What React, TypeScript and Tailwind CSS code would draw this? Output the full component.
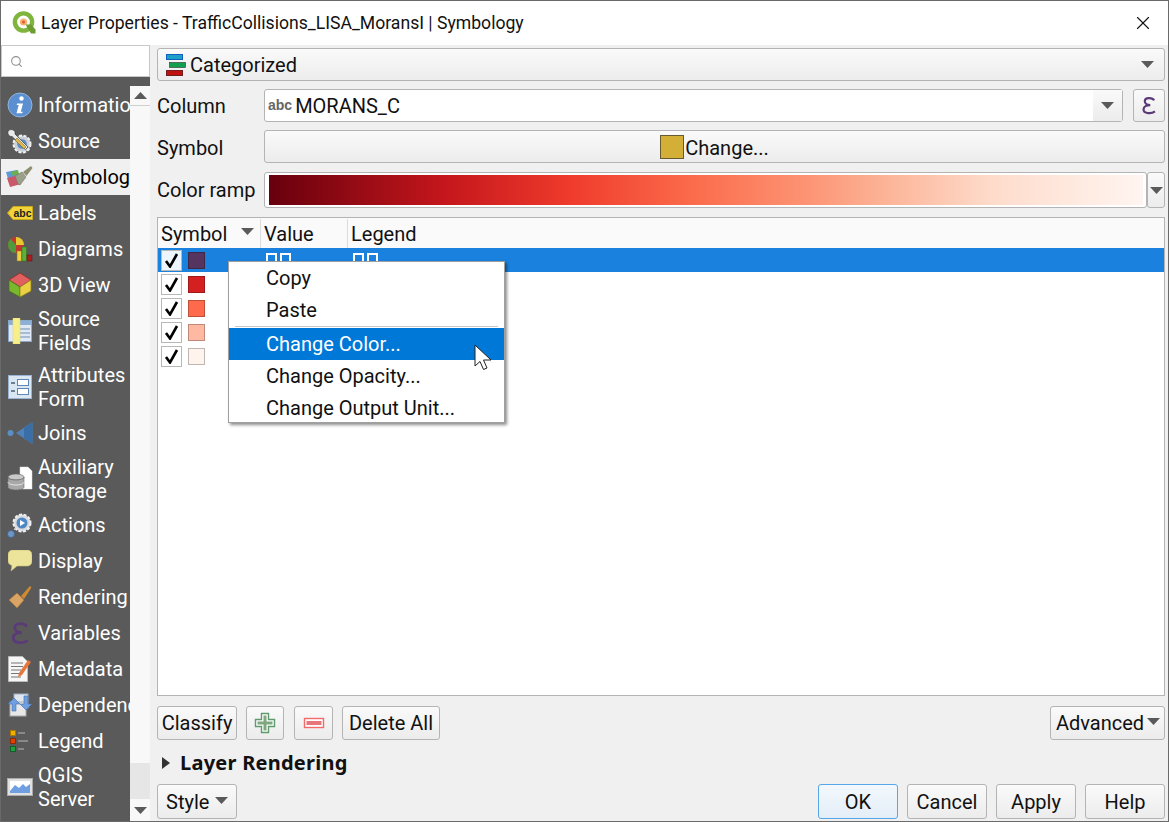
import { ReactNode } from "react";
import { Search, X } from "lucide-react";

function Arrow({ className = "" }: { className?: string }) {
  return (
    <svg width="13" height="7" viewBox="0 0 13 7" className={className}>
      <path d="M0 0h13L6.5 7z" fill="#5a5a5a" />
    </svg>
  );
}

function Btn({ children, className = "" }: { children: ReactNode; className?: string }) {
  return (
    <div
      className={`flex items-center border border-[#b4b4b4] rounded-[3px] bg-gradient-to-b from-[#fafafa] to-[#ececec] ${className}`}
    >
      {children}
    </div>
  );
}

function Epsilon({ size = 22 }: { size?: number }) {
  return (
    <svg width={size * 0.8} height={size} viewBox="0 0 18 22">
      <path
        d="M15.500 5C14 1.500 4.500 1 4.500 6c0 2.800 2.800 4.600 6.500 4.600-4.200 0-8 1.600-8 5.200 0 5 9.500 5.400 13.500 2.200"
        fill="none"
        stroke="#5b3a78"
        strokeWidth="2.600"
      />
    </svg>
  );
}

function QgisLogo() {
  return (
    <svg width="24" height="24" viewBox="0 0 24 24">
      <circle cx="11.500" cy="11" r="8.600" fill="#fff" stroke="#7fb53c" strokeWidth="4.400" />
      <circle cx="11.500" cy="11" r="3.600" fill="#f5b26b" />
      <circle cx="11.500" cy="11" r="1.500" fill="#e8533a" />
      <path d="M13.500 13.500h5.500l4.500 5v4h-4.500z" fill="#6d9c33" />
    </svg>
  );
}

const Icons: Record<string, ReactNode> = {
  info: (
    <svg width="26" height="26" viewBox="0 0 26 26">
      <circle cx="13" cy="13" r="12" fill="#5b8fd0" stroke="#8fb5e0" />
      <circle cx="14.500" cy="6.500" r="2.200" fill="#fff" />
      <path d="M10 11.500h6l-2.200 8.200h2l-.6 1.600H9.500l2.200-8.200H9.700z" fill="#fff" />
    </svg>
  ),
  source: (
    <svg width="26" height="26" viewBox="0 0 26 26">
      <circle cx="15" cy="16" r="8.500" fill="#c9ced4" stroke="#eef0f2" strokeWidth="2" strokeDasharray="3 1.600" />
      <circle cx="15" cy="16" r="4.800" fill="#5c8fc4" />
      <path d="M1 3c3-3 8-1 7 3l13 13-2.600 2.600L5 8.500C3 9 0 6.500 1 3z" fill="#e9e9e9" stroke="#333" strokeWidth=".7" />
      <path d="M10 10l9 9-2 2-9-9z" fill="#e2b84a" stroke="#6a5a20" strokeWidth=".5" />
    </svg>
  ),
  symbology: (
    <svg width="27" height="22" viewBox="0 0 27 22">
      <path d="M0 6l11-2 1 5L2 13z" fill="#5d9ad8" />
      <path d="M5 6l7-2 1 4-6 2z" fill="#6ab04c" />
      <path d="M1 12l11-3 3 9-11 3z" fill="#c9586a" />
      <path d="M9 10l7-4 4 5-6 8-2-1z" fill="#9aa08a" stroke="#6f7565" strokeWidth=".6" />
      <path d="M17 6l8-6 1.500 2-6 8z" fill="#8d8f70" />
    </svg>
  ),
  labels: (
    <svg width="26" height="14" viewBox="0 0 26 14">
      <path d="M6 .5h19.500v13H6L.5 7z" fill="#f3d33a" stroke="#c9a81a" />
      <text x="15.500" y="10.500" textAnchor="middle" fontSize="10.500" fontWeight="700" fill="#222" fontFamily="Liberation Sans">abc</text>
    </svg>
  ),
  diagrams: (
    <svg width="26" height="26" viewBox="0 0 26 26">
      <circle cx="9" cy="9" r="8" fill="#c2372e" />
      <path d="M9 9V1a8 8 0 0 1 8 8z" fill="#e6c832" />
      <path d="M9 9v8a8 8 0 0 1-8-8 8 8 0 0 1 2.500-6z" fill="#4f9a3a" />
      <rect x="10" y="15" width="4.500" height="10" fill="#f0d040" stroke="#8a7a10" strokeWidth=".5" />
      <rect x="15" y="11" width="4.500" height="14" fill="#5fb03a" stroke="#356d1f" strokeWidth=".5" />
      <rect x="20" y="19" width="5" height="6" fill="#a8201c" stroke="#5f100e" strokeWidth=".5" />
    </svg>
  ),
  view3d: (
    <svg width="26" height="26" viewBox="0 0 26 26">
      <path d="M13 1l11 7-11 7L2 8z" fill="#e06060" stroke="#922" strokeWidth=".7" />
      <path d="M2 8l11 7v10L2 19z" fill="#79b82c" stroke="#456f14" strokeWidth=".7" />
      <path d="M24 8l-11 7v10l11-6z" fill="#ecd044" stroke="#90801a" strokeWidth=".7" />
    </svg>
  ),
  fields: (
    <svg width="24" height="26" viewBox="0 0 24 26">
      <rect x=".5" y="2.500" width="23" height="21" fill="#dfe8f4" stroke="#8aa8cc" />
      <rect x="1" y="3" width="22" height="4" fill="#8fb0d6" />
      <path d="M10 11h12M10 15h12M10 19h12" stroke="#6f8fb5" />
      <rect x="5" y="0" width="7" height="26" fill="#f7ef8a" stroke="#e2d860" strokeWidth=".5" />
    </svg>
  ),
  form: (
    <svg width="24" height="24" viewBox="0 0 24 24">
      <rect x=".5" y=".5" width="23" height="23" fill="#dbe6f3" stroke="#9ab4d4" />
      <path d="M3 8h4M3 16h4" stroke="#4a5f78" strokeWidth="1.500" />
      <rect x="9.500" y="4.500" width="11" height="6" fill="#fff" stroke="#5f86b8" />
      <rect x="9.500" y="13.500" width="11" height="6" fill="#fff" stroke="#5f86b8" />
    </svg>
  ),
  joins: (
    <svg width="26" height="22" viewBox="0 0 26 22">
      <circle cx="3.500" cy="11" r="3" fill="#5b8fc4" />
      <path d="M25.500 0v22L9 11z" fill="#4f82b8" />
      <path d="M25.500 0v22L17 16V6z" fill="#3a6ea6" />
    </svg>
  ),
  storage: (
    <svg width="26" height="26" viewBox="0 0 26 26">
      <path d="M13 1h8l4 4v18H13z" fill="#fff" stroke="#ddd" strokeWidth=".5" />
      <ellipse cx="9" cy="11" rx="8" ry="3" fill="#c8c8c8" stroke="#666" strokeWidth=".6" />
      <path d="M1 11v10c0 2 4 3 8 3s8-1 8-3V11c0 2-4 3-8 3s-8-1-8-3z" fill="#a8a8a8" stroke="#666" strokeWidth=".6" />
      <path d="M1 16c0 2 4 3 8 3s8-1 8-3" fill="none" stroke="#e8e8e8" />
    </svg>
  ),
  actions: (
    <svg width="26" height="26" viewBox="0 0 26 26">
      <circle cx="15" cy="11" r="8.500" fill="#d8dade" stroke="#f0f0f0" strokeWidth="2" strokeDasharray="3 1.600" />
      <circle cx="15" cy="11" r="5.500" fill="#4f86c4" />
      <path d="M13 8l5 3-5 3z" fill="#fff" />
      <circle cx="4" cy="22" r="3.500" fill="#6f95c4" stroke="#3d628f" strokeWidth=".7" />
      <path d="M7 18l2-2" stroke="#ccc" />
    </svg>
  ),
  display: (
    <svg width="24" height="22" viewBox="0 0 24 22">
      <path d="M5 0h14c3 0 5 2 5 5v6c0 3-2 5-5 5H9l-6 5 1-5.500C2 15 0 13.500 0 11V5c0-3 2-5 5-5z" fill="#ece49a" stroke="#c9c070" strokeWidth=".6" />
    </svg>
  ),
  rendering: (
    <svg width="24" height="24" viewBox="0 0 24 24">
      <path d="M1 15l8-7 7 7-7 8z" fill="#d9a464" stroke="#a87438" strokeWidth=".7" />
      <path d="M13 11L22 1l1.500 1.500L16 14z" fill="#d08a30" />
    </svg>
  ),
  variables: <Epsilon size={24} />,
  metadata: (
    <svg width="24" height="26" viewBox="0 0 24 26">
      <path d="M.5.500h14l5 5v20H.5z" fill="#f6f6f6" stroke="#bbb" />
      <path d="M3 7h12M3 10.500h12M3 14h10M3 17.500h8M3 21h10" stroke="#777" />
      <path d="M11 17L20 4l3 2-9 13-4 2z" fill="#e8763a" />
    </svg>
  ),
  dependencies: (
    <svg width="26" height="24" viewBox="0 0 26 24">
      <rect x="7" y="1" width="14" height="14" fill="#dfe6ee" stroke="#9fb0c4" />
      <rect x="3" y="9" width="16" height="14" fill="#e8e8e8" stroke="#aaa" />
      <path d="M1 11l6-6 6 6H9v7H5v-7z" fill="#6f9fe0" stroke="#3f6fb0" strokeWidth=".6" />
      <path d="M25 11l-6 6-6-6h4V3h4v8z" fill="#6f9fe0" stroke="#3f6fb0" strokeWidth=".6" />
    </svg>
  ),
  legend: (
    <svg width="20" height="22" viewBox="0 0 20 22">
      <rect x=".5" y=".5" width="5" height="5" fill="#f0b000" stroke="#a87800" />
      <rect x=".5" y="8.500" width="5" height="5" fill="#e04000" stroke="#902800" />
      <rect x=".5" y="16.500" width="5" height="5" fill="#20a040" stroke="#106024" />
      <path d="M8 3h7M8 11h10M8 19h6" stroke="#999" strokeWidth="1.500" />
    </svg>
  ),
  server: (
    <svg width="26" height="18" viewBox="0 0 26 18">
      <rect x=".5" y=".5" width="25" height="17" fill="#e0e0e0" stroke="#aaa" />
      <rect x="3" y="3" width="20" height="12" fill="#fff" />
      <path d="M3 13l5-6 4 3 4-4 3 3 4-3v9H3z" fill="#6f9fe0" />
    </svg>
  ),
};

const navItems: { key: string; label: ReactNode; two?: boolean; active?: boolean }[] = [
  { key: "info", label: "Information" },
  { key: "source", label: "Source" },
  { key: "symbology", label: "Symbology", active: true },
  { key: "labels", label: "Labels" },
  { key: "diagrams", label: "Diagrams" },
  { key: "view3d", label: "3D View" },
  { key: "fields", label: <>Source<br />Fields</>, two: true },
  { key: "form", label: <>Attributes<br />Form</>, two: true },
  { key: "joins", label: "Joins" },
  { key: "storage", label: <>Auxiliary<br />Storage</>, two: true },
  { key: "actions", label: "Actions" },
  { key: "display", label: "Display" },
  { key: "rendering", label: "Rendering" },
  { key: "variables", label: "Variables" },
  { key: "metadata", label: "Metadata" },
  { key: "dependencies", label: "Dependencies" },
  { key: "legend", label: "Legend" },
  { key: "server", label: <>QGIS<br />Server</>, two: true },
];

function Sidebar() {
  return (
    <div className="w-[149px] shrink-0 flex flex-col h-full">
      <div className="h-[32px] flex items-center bg-white border border-[#c8c8c8] pl-2">
        <Search size={13} color="#909090" />
      </div>
      <div className="flex-1 flex flex-col min-h-0 bg-[#5a5a5a]">
        <div className="h-[9px] shrink-0" />
        <div className="flex-1 flex min-h-0">
          <div className="w-[129px] overflow-hidden flex flex-col whitespace-nowrap pt-[1px]">
            {navItems.map((n) => (
              <div
                key={n.key}
                className={`flex items-center shrink-0 ${n.two ? "h-[56px]" : "h-[36px]"} ${n.active ? "bg-[#f0f0f0] text-black" : "text-white"}`}
              >
                <div className="w-[37px] shrink-0 flex items-center justify-center">{Icons[n.key]}</div>
                <div className={`leading-[24px] ${n.active ? "pl-[3px]" : ""}`}>{n.label}</div>
              </div>
            ))}
          </div>
          <div className="w-[20px] flex flex-col bg-[#e6e6e6]">
            <div className="h-[20px] flex items-center justify-center bg-[#f8f8f8] border-b border-[#d0d0d0]">
              <Arrow className="rotate-180" />
            </div>
            <div className="h-[657px] bg-[#f8f8f8]" />
            <div className="flex-1" />
            <div className="h-[22px] flex items-center justify-center bg-[#f8f8f8]">
              <Arrow />
            </div>
          </div>
        </div>
      </div>
    </div>
  );
}

function Tofu() {
  return (
    <div className="flex gap-[3px] h-[14px]">
      <div className="w-[11px] border-2 border-white" />
      <div className="w-[11px] border-2 border-white" />
    </div>
  );
}

const classes = ["#553560", "#d42020", "#ff6a4d", "#ffb9a3", "#fff3ee"];

function Check({ selected }: { selected?: boolean }) {
  return (
    <div className={`w-[21px] h-[21px] flex items-center justify-center border border-[#b8b8b8] ${selected ? "bg-[#eef6fd]" : "bg-white"}`}>
      <svg width="15" height="15" viewBox="0 0 15 15">
        <path d="M2 8l4 5.500L13 1" fill="none" stroke="#000" strokeWidth="2.600" />
      </svg>
    </div>
  );
}

function CategoryTable() {
  return (
    <div className="flex-1 min-h-0 bg-white border border-[#b4b4b4] flex flex-col">
      <div className="h-[30px] shrink-0 flex items-center bg-[#fafafa] pt-[1px]">
        <div className="w-[103px] h-full flex items-center justify-between pl-[3px] pr-[6px] border-r border-[#dcdcdc]">
          <span>Symbol</span>
          <Arrow className="-mt-[4px]" />
        </div>
        <div className="w-[87px] h-full flex items-center pl-[3px] border-r border-[#dcdcdc]">Value</div>
        <div className="pl-[3px]">Legend</div>
      </div>
      {classes.map((c, i) => (
        <div key={c} className={`h-[24px] shrink-0 flex items-center pl-[3px] ${i === 0 ? "bg-[#1a82de]" : ""}`}>
          <Check selected={i === 0} />
          <div className="w-[17px] h-[17px] ml-[6px] border border-[#00000040]" style={{ backgroundColor: c }} />
          {i === 0 && (
            <div className="flex self-start pt-[5px]">
              <div className="ml-[61px]"><Tofu /></div>
              <div className="ml-[62px]"><Tofu /></div>
            </div>
          )}
        </div>
      ))}
    </div>
  );
}

function ContextMenu() {
  const item = "h-[32px] flex items-center pl-[37px]";
  return (
    <div className="absolute left-[227px] top-[260px] w-[277px] h-[162px] bg-white border border-[#a0a0a0] shadow-[2px_2px_3px_rgba(0,0,0,0.45)] text-[#111]">
      <div className={item}>Copy</div>
      <div className={item}>Paste</div>
      <div className="h-[1px] bg-[#c8c8c8] mx-[6px]" />
      <div className={`${item} mt-[1px] bg-[#0078d7] text-white`}>Change Color...</div>
      <div className={item}>Change Opacity...</div>
      <div className={item}>Change Output Unit...</div>
    </div>
  );
}

function Cursor() {
  return (
    <svg width="20" height="28" viewBox="0 0 20 28" className="absolute left-[473px] top-[343px]">
      <path d="M1 1v21l5-4.500 3.500 8 3.500-1.500-3.500-8H17z" fill="#fff" stroke="#222" strokeWidth="1" strokeLinejoin="round" />
    </svg>
  );
}

export default function App() {
  return (
    <div className="relative w-[1169px] h-[822px] overflow-hidden bg-[#f0f0f0] border border-[#6a6a6a] flex flex-col text-[20px] text-[#111] font-['Roboto','Liberation_Sans',sans-serif]">
      <div className="h-[44px] shrink-0 bg-white flex items-center pl-[11px] pr-[14px]">
        <QgisLogo />
        <div className="ml-[5px] text-[17.6px]">Layer Properties - TrafficCollisions_LISA_MoransI | Symbology</div>
        <X size={22} strokeWidth={1.2} className="ml-auto" />
      </div>
      <div className="flex-1 min-h-0 flex">
        <Sidebar />
        <div className="flex-1 min-w-0 pl-[7px] pr-[3px] pt-[3px] pb-[2px] flex flex-col">
          <Btn className="h-[33px] shrink-0 justify-between pl-[8px] pr-[10px]">
            <div className="flex items-center gap-[4px]">
              <svg width="20" height="24" viewBox="0 0 20 24">
                <rect x=".5" y="1.500" width="16" height="5" fill="#1ca0c8" stroke="#1060c0" />
                <rect x="3.500" y="9.500" width="16" height="5" fill="#10a050" stroke="#333" strokeWidth=".6" />
                <rect x=".5" y="17.500" width="16" height="5" fill="#c01010" stroke="#702020" />
              </svg>
              Categorized
            </div>
            <Arrow />
          </Btn>
          <div className="h-[33px] mt-[8px] shrink-0 flex items-center">
            <div className="w-[107px] shrink-0">Column</div>
            <div className="flex-1 h-full flex items-stretch bg-white border border-[#b4b4b4] rounded-[3px]">
              <div className="flex-1 flex items-center pl-[3px] gap-[3px]">
                <span className="text-[14px] font-bold text-[#666] font-['Liberation_Sans',sans-serif]">abc</span>
                MORANS_C
              </div>
              <div className="w-[29px] flex items-center justify-center bg-gradient-to-b from-[#fafafa] to-[#ececec]">
                <Arrow />
              </div>
            </div>
            <Btn className="w-[32px] h-full ml-[10px] shrink-0 justify-center">
              <Epsilon size={19} />
            </Btn>
          </div>
          <div className="h-[33px] mt-[8px] shrink-0 flex items-center">
            <div className="w-[107px] shrink-0 pt-[2px]">Symbol</div>
            <Btn className="flex-1 h-full justify-center gap-[1px]">
              <div className="w-[24px] h-[24px] bg-[#d4af37] border border-[#665a30]" />
              <span className="pt-[2px]">Change...</span>
            </Btn>
          </div>
          <div className="h-[36px] mt-[9px] shrink-0 flex items-center">
            <div className="w-[107px] shrink-0">Color ramp</div>
            <div className="flex-1 h-full flex">
              <Btn className="flex-1 h-full py-[2px] pl-[4px] pr-[3px] !from-white !to-white">
                <div className="w-full h-full bg-[linear-gradient(to_right,#67000d_0%,#c4161c_20%,#ef3b2c_34.5%,#fb6a4a_48%,#fc9272_61%,#fcb599_71%,#fedccc_83%,#fff5f0_100%)]" />
              </Btn>
              <Btn className="w-[18px] h-full shrink-0 justify-center">
                <Arrow />
              </Btn>
            </div>
          </div>
          <div className="flex-1 min-h-0 mt-[9px] flex flex-col">
            <CategoryTable />
          </div>
          <div className="h-[34px] mt-[10px] shrink-0 flex items-center">
            <Btn className="w-[80px] h-full justify-center">Classify</Btn>
            <Btn className="w-[38px] h-full ml-[9px] justify-center">
              <svg width="22" height="22" viewBox="0 0 22 22">
                <path d="M7.500 1.500h7v6h6v7h-6v6h-7v-6h-6v-7h6z" fill="#fff" stroke="#5f9a6f" strokeWidth="1.400" />
                <path d="M9.500 3.500h3v6h6v3h-6v6h-3v-6h-6v-3h6z" fill="#7fa87f" />
              </svg>
            </Btn>
            <Btn className="w-[39px] h-full ml-[10px] justify-center">
              <svg width="22" height="12" viewBox="0 0 22 12">
                <rect x="1.500" y="1.500" width="19" height="9" fill="#fff" stroke="#f26a6a" strokeWidth="1.400" />
                <rect x="3.500" y="4" width="15" height="4" fill="#e8757a" />
              </svg>
            </Btn>
            <Btn className="w-[98px] h-full ml-[9px] justify-center">Delete All</Btn>
            <Btn className="w-[115px] h-full ml-auto justify-between pl-[5px] pr-[4px]">
              Advanced
              <Arrow className="-mt-[3px]" />
            </Btn>
          </div>
          <div className="h-[24px] mt-[11px] shrink-0 flex items-center">
            <svg width="8" height="12" viewBox="0 0 8 12" className="ml-[5px]">
              <path d="M0 0l8 6-8 6z" fill="#333" />
            </svg>
            <span className="ml-[10px] font-bold font-['Noto_Sans',sans-serif] tracking-[0.25px]">Layer Rendering</span>
          </div>
          <div className="h-[35px] mt-[9px] shrink-0 flex items-center">
            <Btn className="w-[80px] h-full justify-between pl-[8px] pr-[8px]">
              Style
              <Arrow className="-mt-[3px]" />
            </Btn>
            <div className="ml-auto h-full flex gap-[9px]">
              <Btn className="w-[80px] h-full justify-center !border-[#57a7e8] !from-[#f2f8fd] !to-[#e4eef7]">OK</Btn>
              <Btn className="w-[80px] h-full justify-center">Cancel</Btn>
              <Btn className="w-[80px] h-full justify-center">Apply</Btn>
              <Btn className="w-[80px] h-full justify-center">Help</Btn>
            </div>
          </div>
        </div>
      </div>
      <ContextMenu />
      <Cursor />
    </div>
  );
}
